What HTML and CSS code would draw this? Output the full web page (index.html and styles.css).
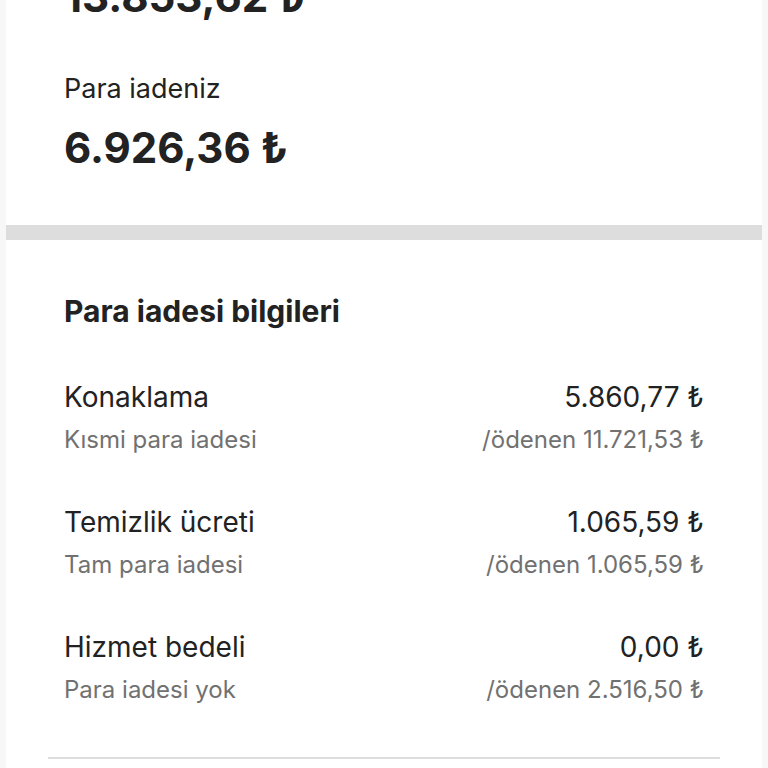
FILE: index.html
```html
<!DOCTYPE html>
<html lang="tr">

<head>
  <meta charset="UTF-8">
  <meta name="viewport" content="width=device-width, initial-scale=1.0">
  <title>Para iadesi</title>
  <link rel="stylesheet" href="styles.css">
</head>

<body>
  <div class="page">
    <!-- refund summary, the first total is scrolled off the top -->
    <section class="summary">
      <div class="total cut">13.853,62 ₺</div>
      <div class="label">Para iadeniz</div>
      <div class="total">6.926,36 ₺</div>
    </section>

    <div class="band"></div>

    <section class="details">
      <h2>Para iadesi bilgileri</h2>

      <div class="row">
        <div class="main">
          <span>Konaklama</span>
          <span>5.860,77 ₺</span>
        </div>
        <div class="sub">
          <span>Kısmi para iadesi</span>
          <span>/ödenen 11.721,53 ₺</span>
        </div>
      </div>

      <div class="row">
        <div class="main">
          <span>Temizlik ücreti</span>
          <span>1.065,59 ₺</span>
        </div>
        <div class="sub">
          <span>Tam para iadesi</span>
          <span>/ödenen 1.065,59 ₺</span>
        </div>
      </div>

      <div class="row">
        <div class="main">
          <span>Hizmet bedeli</span>
          <span>0,00 ₺</span>
        </div>
        <div class="sub">
          <span>Para iadesi yok</span>
          <span>/ödenen 2.516,50 ₺</span>
        </div>
      </div>

      <hr class="divider">
    </section>
  </div>
</body>

</html>
```

FILE: styles.css
```css
body {
  margin: 0;
  background-color: #f7f7f7;
  font-family: Inter, "Noto Sans", sans-serif;
  color: #222222;
}

.page {
  margin: 0 6px;
  background-color: #ffffff;
  height: 768px;
  overflow: hidden;
}

.summary {
  padding: 0 58px;
  margin-top: -30px;
}

.total {
  font-size: 42px;
  font-weight: 700;
  line-height: 54px;
}

.total.cut {
  margin-bottom: 48px;
}

.label {
  font-size: 27px;
  line-height: 34px;
  margin-bottom: 15px;
}

.band {
  height: 15px;
  margin: 50px -6px 0;
  background-color: #dddddd;
}

.details {
  padding: 53px 58px 0;
}

h2 {
  font-size: 30px;
  font-weight: 700;
  line-height: 36px;
  margin: 0 0 51px;
}

.row {
  margin-bottom: 50px;
}

.main,
.sub {
  display: flex;
  justify-content: space-between;
}

.main {
  font-size: 28px;
  line-height: 34px;
  margin-bottom: 11px;
}

.sub {
  font-size: 24px;
  line-height: 30px;
  color: #717171;
}

.divider {
  border: none;
  height: 2px;
  background-color: #dddddd;
  margin: 52px -16px 0 -16px;
}
```
